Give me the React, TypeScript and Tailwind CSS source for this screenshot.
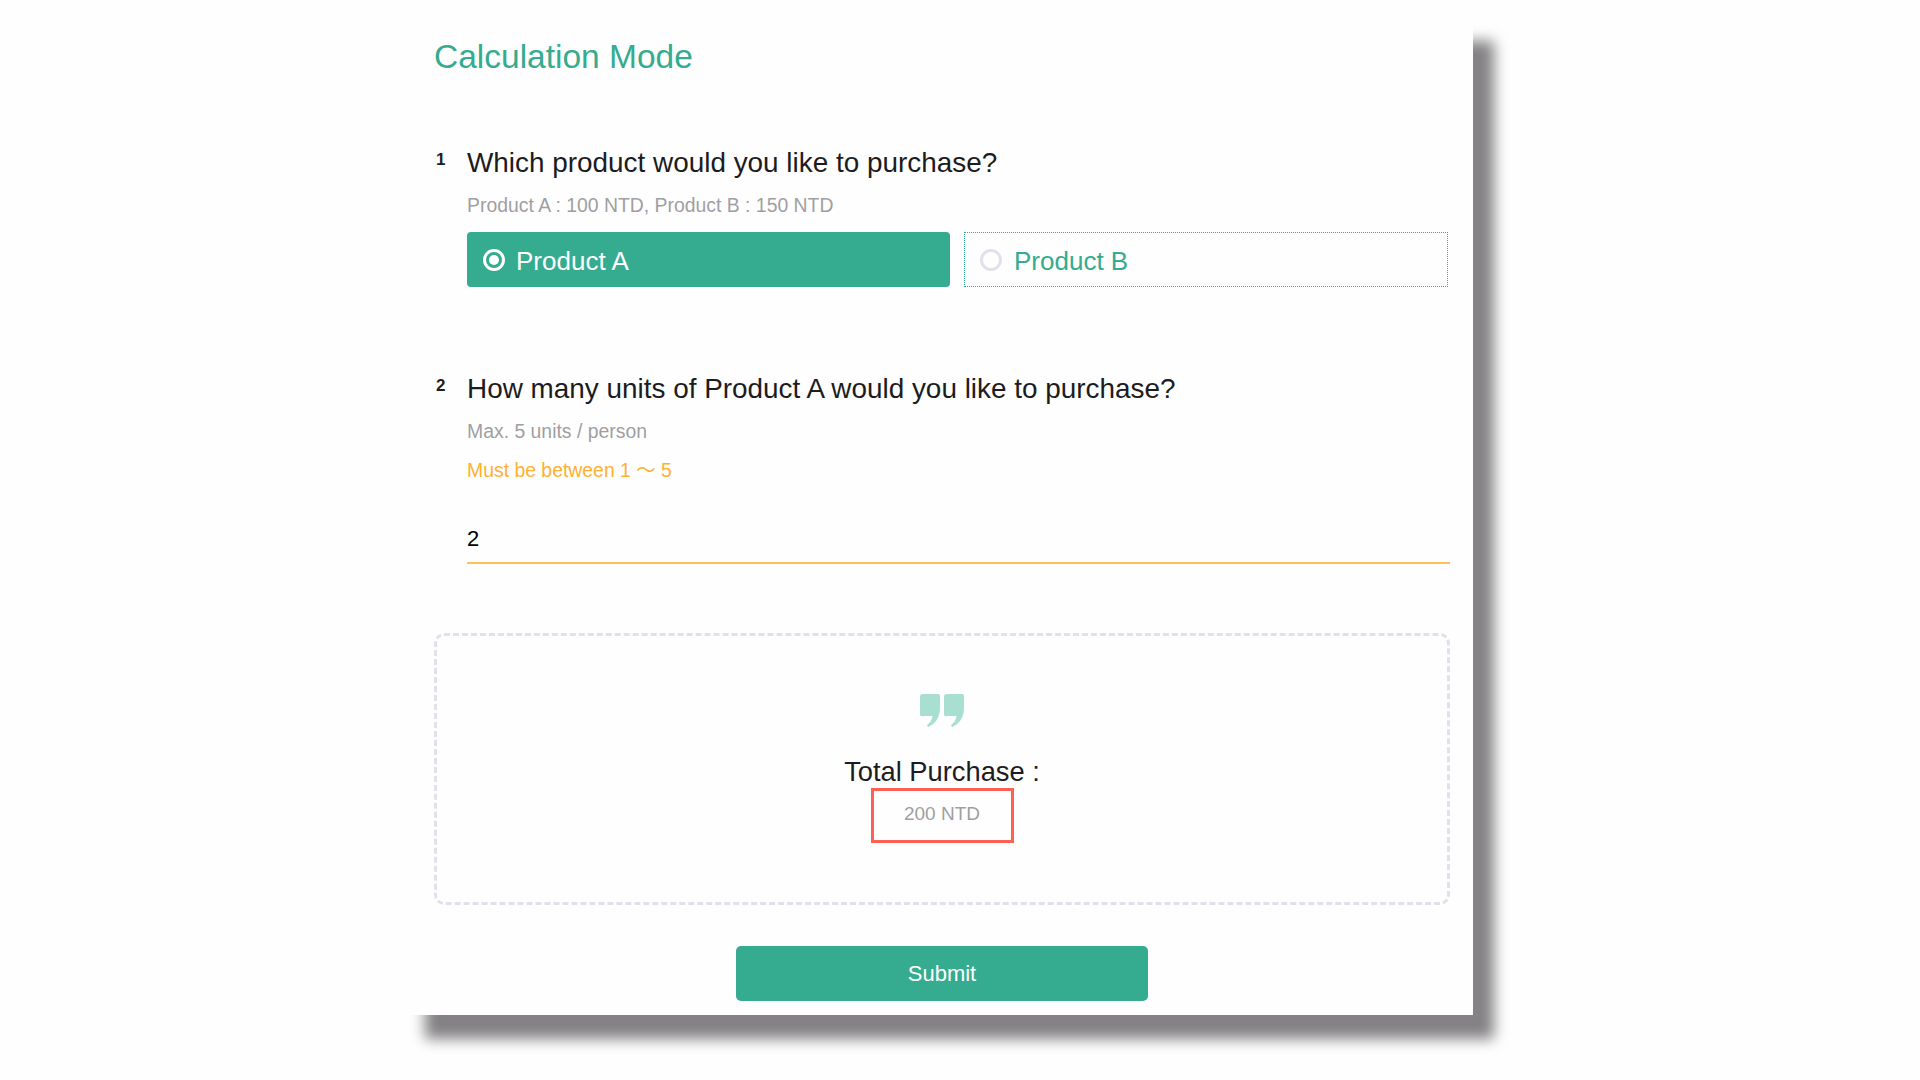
const QUOTE_PATH =
  "M3 0H18a2 2 0 0 1 2 2V14C20 24 15 30 8 33L7 31C10 29 12 26 12.500 22H3a2 2 0 0 1-3-2V3a3 3 0 0 1 3-3Z";

function QuoteIcon() {
  return (
    <svg width="44" height="33" viewBox="0 0 44 33" fill="#a8dfd1">
      <path d={QUOTE_PATH} />
      <path d={QUOTE_PATH} transform="translate(24 0)" />
    </svg>
  );
}

function Question({ num, title, children }: { num: number; title: string; children: React.ReactNode }) {
  return (
    <div className="flex">
      <div className="w-[33px] pl-[2px] pt-[1px] text-[17px] leading-[26px] font-bold text-[#1c1c1e]">{num}</div>
      <div className="flex-1">
        <h2 className="text-[27.9px] leading-[34px] text-[#1c1c1e]">{title}</h2>
        {children}
      </div>
    </div>
  );
}

export default function App() {
  return (
    <div className="min-h-[1080px] bg-[#fefefe] pt-[17px] pl-[404px] overflow-hidden font-['Liberation_Sans','Noto_Sans_CJK_SC',sans-serif]">
      <div className="h-[998px] w-[1069px] bg-[#fefefe] pl-[30px] pr-[23px] pt-[20px] shadow-[21px_24px_13px_#848284]">
        <h1 className="text-[33.5px] leading-[40px] text-[#35ab8f]">Calculation Mode</h1>

        <div className="mt-[69px]">
          <Question num={1} title="Which product would you like to purchase?">
            <p className="mt-[11px] text-[19.4px] leading-[28px] text-[#a09ea2]">Product A : 100 NTD, Product B : 150 NTD</p>
            <div className="mt-[13px] flex gap-[14px]">
              <div className="flex h-[55px] w-[483px] items-center gap-[11px] rounded-[4px] bg-[#35ab8f] pl-[16px] text-[26px] text-white">
                <span className="flex size-[22px] items-center justify-center rounded-full border-[3px] border-white">
                  <span className="size-[10px] rounded-full bg-white" />
                </span>
                <span className="pt-[4px]">Product A</span>
              </div>
              <div className="flex h-[55px] w-[484px] items-center gap-[12px] border border-dotted border-[#35ab8f] pl-[15px] text-[26px] text-[#35ab8f]">
                <span className="size-[22px] rounded-full border-[3px] border-[#e2e0ea]" />
                <span className="pt-[4px]">Product B</span>
              </div>
            </div>
          </Question>
        </div>

        <div className="mt-[85px]">
          <Question num={2} title="How many units of Product A would you like to purchase?">
            <p className="mt-[11px] text-[19.4px] leading-[28px] text-[#a09ea2]">Max. 5 units / person</p>
            <p className="mt-[11px] text-[19.4px] leading-[28px] text-[#ffb02e]">Must be between 1 ～ 5</p>
            <input
              readOnly
              value="2"
              className="mt-[32px] block h-[48px] w-full border-b-2 border-[#ffc05c] bg-transparent text-[22px] text-black outline-none"
            />
          </Question>
        </div>

        <div className="mt-[69px] flex h-[272px] flex-col items-center rounded-[10px] border-[3px] border-dashed border-[#e2e0ec] pt-[58px]">
          <QuoteIcon />
          <div className="mt-[28px] text-[27.3px] leading-[34px] text-[#1c1c1e]">Total Purchase :</div>
          <div className="-mt-[1px] flex h-[55px] w-[143px] items-center justify-center border-[3px] border-[#fc6152] pb-[2px] text-[19px] text-[#a09ea2]">
            200 NTD
          </div>
        </div>

        <button className="mx-auto mt-[41px] block h-[55px] w-[412px] rounded-[5px] bg-[#35ab8f] text-[22px] text-white">
          Submit
        </button>
      </div>
    </div>
  );
}
